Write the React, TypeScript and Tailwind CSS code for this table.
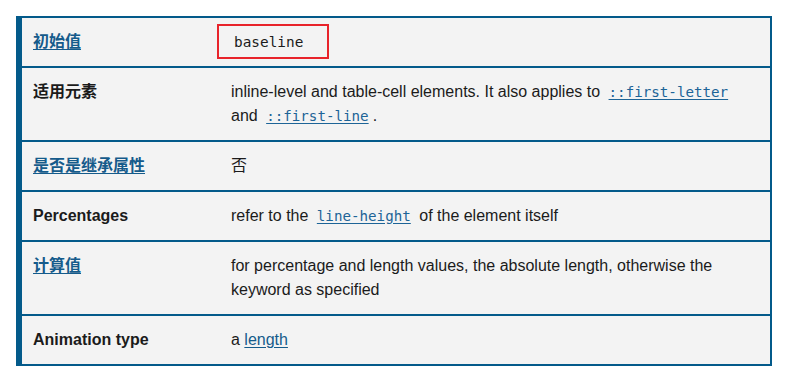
import type { ReactNode } from "react";

const SANS = "font-['Liberation_Sans','Noto_Sans_CJK_SC',sans-serif]";
const MONO = "font-['DejaVu_Sans_Mono','Liberation_Mono',monospace]";

const CodeLink = ({ children }: { children: ReactNode }) => (
  <a
    href="#"
    className={`${MONO} text-[14.2px] text-[#1d6497] underline underline-offset-2 px-[4px]`}
  >
    {children}
  </a>
);

const TextLink = ({ children }: { children: ReactNode }) => (
  <a href="#" className="text-[#155b8b] underline underline-offset-2">
    {children}
  </a>
);

interface PropRow {
  label: ReactNode;
  value: ReactNode;
}

const rows: PropRow[] = [
  {
    label: <TextLink>初始值</TextLink>,
    value: (
      <div className="flex items-center h-[35px] w-[112px] -ml-[14px] -mt-[6px] -mb-[5px] border-2 border-[#e8232a] pl-[15px]">
        <code className={`${MONO} text-[14.4px] text-[#1b1b1b]`}>baseline</code>
      </div>
    ),
  },
  {
    label: "适用元素",
    value: (
      <>
        inline-level and table-cell elements. It also applies to{" "}
        <CodeLink>::first-letter</CodeLink> and <CodeLink>::first-line</CodeLink>.
      </>
    ),
  },
  { label: <TextLink>是否是继承属性</TextLink>, value: "否" },
  {
    label: "Percentages",
    value: (
      <>
        refer to the <CodeLink>line-height</CodeLink> of the element itself
      </>
    ),
  },
  {
    label: <TextLink>计算值</TextLink>,
    value:
      "for percentage and length values, the absolute length, otherwise the keyword as specified",
  },
  {
    label: "Animation type",
    value: (
      <>
        a <TextLink>length</TextLink>
      </>
    ),
  },
];

const App = () => {
  return (
    <div className={`w-[803px] h-[380px] bg-white pt-[16px] pl-[16px] ${SANS}`}>
      <div className="w-[756px] border-2 border-l-[6px] border-[#035a8a] bg-[#f3f3f3] text-[16px] leading-[24px] text-[#1b1b1b]">
        {rows.map((row, i) => (
          <div
            key={i}
            className={`flex ${i > 0 ? "border-t-2 border-[#035a8a]" : ""}`}
          >
            <div className="w-[198px] shrink-0 pl-[11px] py-[12px] font-bold">
              {row.label}
            </div>
            <div className="flex-1 pl-[11px] pr-[11px] py-[12px]">{row.value}</div>
          </div>
        ))}
      </div>
    </div>
  );
};

export default App;
